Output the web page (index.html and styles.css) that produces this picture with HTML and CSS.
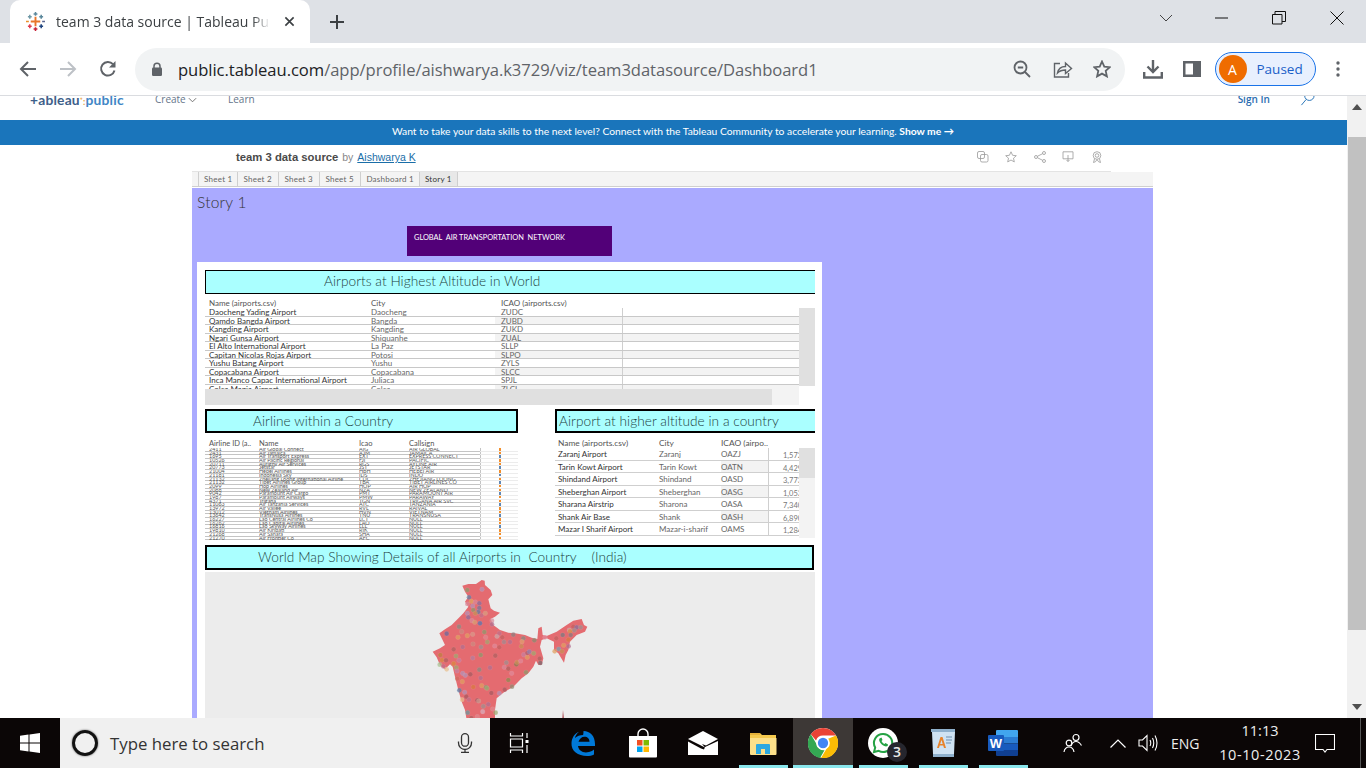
FILE: index.html
```html
<!DOCTYPE html>
<html lang="en">
<head>
<meta charset="utf-8">
<title>team 3 data source | Tableau Public</title>
<link rel="stylesheet" href="styles.css">
</head>
<body>
<div class="screen">
  <header class="tabstrip">
    <div class="tab">
      <svg class="favicon" viewBox="0 0 20 20"><g stroke-width="1.6" fill="none"><path d="M10 5v10M5 10h10" stroke="#e8762b" stroke-width="2"/><path d="M10 0v4M8 2h4" stroke="#5b879b"/><path d="M10 16v4M8 18h4" stroke="#c72037"/><path d="M4 3v4M2 5h4" stroke="#7099a6"/><path d="M16 3v4M14 5h4" stroke="#59879b"/><path d="M4 13v4M2 15h4" stroke="#e03c4f"/><path d="M16 13v4M14 15h4" stroke="#1f447e"/><path d="M0 10h3" stroke="#eb9129"/><path d="M17 10h3" stroke="#5b6591"/></g></svg>
      <span class="tab-title">team 3 data source | Tableau Public</span>
      <svg class="tab-close" viewBox="0 0 12 12"><path d="M1.5 1.5l9 9M10.5 1.5l-9 9" stroke="#3c4043" stroke-width="1.8"/></svg>
    </div>
    <svg class="new-tab" viewBox="0 0 16 16"><path d="M8 1v14M1 8h14" stroke="#3c4043" stroke-width="2"/></svg>
    <div class="win-controls">
      <svg class="wc wc-chev" viewBox="0 0 14 8"><path d="M1 1l6 6 6-6" fill="none" stroke="#444" stroke-width="1"/></svg>
      <svg class="wc wc-min" viewBox="0 0 14 14"><path d="M0 7h13" stroke="#111" stroke-width="1"/></svg>
      <svg class="wc wc-max" viewBox="0 0 14 14"><path d="M.5 3.500h9.500v9.500h-9.500zM3 3.500v-3h10.500v10h-3.500" fill="none" stroke="#111" stroke-width="1"/></svg>
      <svg class="wc wc-close" viewBox="0 0 14 14"><path d="M.5.500l13 13M13.500.500l-13 13" stroke="#111" stroke-width="1"/></svg>
    </div>
  </header>

  <div class="toolbar">
    <svg class="nav-ic" viewBox="0 0 18 18"><path d="M17 9H2M9 2L2 9l7 7" fill="none" stroke="#5f6368" stroke-width="2"/></svg>
    <svg class="nav-ic" viewBox="0 0 18 18"><path d="M1 9h15M9 2l7 7-7 7" fill="none" stroke="#bdc1c6" stroke-width="2"/></svg>
    <svg class="nav-ic" viewBox="0 0 18 18"><path d="M15.500 10.500A6.800 6.800 0 1 1 14 4.200" fill="none" stroke="#5f6368" stroke-width="2"/><path d="M16.500 1v6.500H10z" fill="#5f6368"/></svg>
    <div class="omnibox">
      <svg class="lock" viewBox="0 0 12 14"><path d="M3 6V4.200a3 3 0 0 1 6 0V6" fill="none" stroke="#5f6368" stroke-width="1.500"/><rect x="1" y="5.500" width="10" height="8.500" rx="1.200" fill="#5f6368"/></svg>
      <span class="url"><span class="url-host">public.tableau.com</span>/app/profile/aishwarya.k3729/viz/team3datasource/Dashboard1</span>
      <svg class="omni-ic zoom-ic" viewBox="0 0 18 18"><circle cx="7.500" cy="7.500" r="6" fill="none" stroke="#5f6368" stroke-width="1.800"/><path d="M4.800 7.500h5.400M12 12l5 5" stroke="#5f6368" stroke-width="1.800"/></svg>
      <svg class="omni-ic share-ic" viewBox="0 0 20 18"><path d="M7 3.500H1.500v13.500h14V13" fill="none" stroke="#5f6368" stroke-width="1.400"/><path d="M4.500 13c.8-4 4-6.500 8-6.500V3l6 5.500-6 5V10c-3.500 0-6 1-8 3z" fill="none" stroke="#5f6368" stroke-width="1.400"/></svg>
      <svg class="omni-ic star-ic" viewBox="0 0 18 18"><path d="M9 1.500l2.300 5.100 5.500.6-4.100 3.700 1.200 5.500L9 13.600l-4.900 2.800 1.200-5.500L1.200 7.200l5.500-.6z" fill="none" stroke="#5f6368" stroke-width="1.800"/></svg>
    </div>
    <svg class="tool-ic dl-ic" viewBox="0 0 20 20"><path d="M10 1v11M4.500 7.500L10 13l5.500-5.500" fill="none" stroke="#5f6368" stroke-width="2.400"/><path d="M1.200 13v5.500h17.600V13" fill="none" stroke="#5f6368" stroke-width="2.400"/></svg>
    <svg class="tool-ic side-ic" viewBox="0 0 18 16"><path d="M0 0h18v16H0z" fill="#5f6368"/><path d="M2.500 2.500h7.500v11H2.500z" fill="#fff"/></svg>
    <div class="profile"><span class="avatar">A</span><span class="paused">Paused</span></div>
    <svg class="dots" viewBox="0 0 4 16"><circle cx="2" cy="2" r="1.700"/><circle cx="2" cy="8" r="1.700"/><circle cx="2" cy="14" r="1.700"/></svg>
  </div>

  <div class="viewport">
    <main class="page">
      <nav class="sitenav">
        <span class="logo"><span class="logo-a">+ableau</span><span class="logo-dot">⁺:</span><span class="logo-b">public</span></span>
        <span class="navlink nav-create">Create<svg class="caret" viewBox="0 0 10 6"><path d="M1 1l4 4 4-4" fill="none" stroke="#666" stroke-width="1"/></svg></span>
        <span class="navlink nav-learn">Learn</span>
        <span class="signin">Sign In</span>
        <svg class="search" viewBox="0 0 16 16"><circle cx="10" cy="4" r="5" fill="none" stroke="#1f6fb5" stroke-width="1"/><path d="M6.500 8L1.500 14" stroke="#1f6fb5" stroke-width="1"/></svg>
      </nav>
      <div class="banner">Want to take your data skills to the next level? Connect with the Tableau Community to accelerate your learning. <b>Show me →</b></div>
      <div class="vizhead">
        <div class="vizname"><b>team 3 data source</b> <span class="by">by</span> <a class="author">Aishwarya K</a></div>
        <div class="vizactions">
          <svg viewBox="0 0 12 12"><rect x=".5" y=".5" width="7" height="7" rx="1.500"/><rect x="3.500" y="3.500" width="7.500" height="7.500" rx="1.500"/></svg>
          <svg viewBox="0 0 12 12"><path d="M6 .8l1.600 3.500 3.700.4-2.800 2.500.8 3.700L6 9l-3.300 1.900.8-3.700L.7 4.700l3.700-.4z"/></svg>
          <svg viewBox="0 0 12 12"><circle cx="2" cy="6" r="1.500"/><circle cx="10" cy="2" r="1.500"/><circle cx="10" cy="10" r="1.500"/><path d="M3.400 5.300l5.200-2.600M3.400 6.700l5.200 2.600"/></svg>
          <svg viewBox="0 0 12 12"><path d="M1 .8h10v7H1zM6 4v6.500M4.500 9L6 10.500 7.500 9"/></svg>
          <svg viewBox="0 0 12 12"><circle cx="6" cy="4.500" r="3.800"/><circle cx="6" cy="4.500" r="1.800"/><path d="M3.500 8L2.500 11.500l2-.8L6 8.500l1.500 2.200 2 .8L8.500 8"/></svg>
        </div>
      </div>
      <section class="viz">
        <div class="vtabs">
          <span class="vtab">Sheet 1</span><span class="vtab vtab-w">Sheet 2</span><span class="vtab vtab-w">Sheet 3</span><span class="vtab vtab-w">Sheet 5</span><span class="vtab">Dashboard 1</span><span class="vtab vtab-on">Story 1</span>
        </div>
        <div class="story">
          <h1 class="story-title">Story 1</h1>
          <div class="purple">GLOBAL  AIR TRANSPORTATION  NETWORK</div>
          <div class="board">
            <h2 class="bar bar-wide"><span class="t1">Airports at Highest Altitude in World</span></h2>
            <div class="t-block">
              <div class="th tg-high"><span>Name (airports.csv)</span><span>City</span><span>ICAO (airports.csv)</span></div>
              <div class="t-body">
                <div class="high-rows">
                  <div class="tr tg-high"><span>Daocheng Yading Airport</span><span class="m">Daocheng</span><span class="m">ZUDC</span></div>
                  <div class="tr tg-high alt"><span>Qamdo Bangda Airport</span><span class="m">Bangda</span><span class="m">ZUBD</span></div>
                  <div class="tr tg-high"><span>Kangding Airport</span><span class="m">Kangding</span><span class="m">ZUKD</span></div>
                  <div class="tr tg-high alt"><span>Ngari Gunsa Airport</span><span class="m">Shiquanhe</span><span class="m">ZUAL</span></div>
                  <div class="tr tg-high"><span>El Alto International Airport</span><span class="m">La Paz</span><span class="m">SLLP</span></div>
                  <div class="tr tg-high alt"><span>Capitan Nicolas Rojas Airport</span><span class="m">Potosi</span><span class="m">SLPO</span></div>
                  <div class="tr tg-high"><span>Yushu Batang Airport</span><span class="m">Yushu</span><span class="m">ZYLS</span></div>
                  <div class="tr tg-high alt"><span>Copacabana Airport</span><span class="m">Copacabana</span><span class="m">SLCC</span></div>
                  <div class="tr tg-high"><span>Inca Manco Capac International Airport</span><span class="m">Juliaca</span><span class="m">SPJL</span></div>
                  <div class="tr tg-high alt"><span>Colca Magia Airport</span><span class="m">Colca</span><span class="m">ZLCL</span></div>
                </div>
                <div class="vscroll"></div>
              </div>
              <div class="hscroll"><div class="hthumb"></div></div>
            </div>

            <div class="two-col">
              <div class="col-air">
                <h2 class="bar"><span class="t2">Airline within a Country</span></h2>
                <div class="th ta-grid"><span>Airline ID (a..</span><span>Name</span><span>Icao</span><span>Callsign</span></div>
                <div class="tiny">
                  <div class="trow"><span>2411</span><span>Air Global Connect</span><span>AIG</span><span>AIR GLOBAL</span><i class="o"></i></div>
                  <div class="trow"><span>2431</span><span>Air Jamaica</span><span>AJM</span><span>JAMAICA</span><i class="o"></i></div>
                  <div class="trow"><span>1695</span><span>Air Transport Express</span><span>EXT</span><span>EXPRESS CONNECT</span><i class="b"></i></div>
                  <div class="trow"><span>10526</span><span>Air Pacific Regional</span><span>FJI</span><span>PACIFIC</span><i class="o"></i></div>
                  <div class="trow"><span>20711</span><span>Aurigny Air Services</span><span>RGS</span><span>AYLINE AIR</span><i class="o"></i></div>
                  <div class="trow"><span>20773</span><span>Jetstar</span><span>JST</span><span>JETSTAR</span><i class="b"></i></div>
                  <div class="trow"><span>21004</span><span>Hebei Airlines</span><span>HBH</span><span>HEBEI AIR</span><i class="o"></i></div>
                  <div class="trow"><span>21181</span><span>Indonesia Sky</span><span>IDS</span><span>INDO</span><i class="b"></i></div>
                  <div class="trow"><span>21132</span><span>Zhejiang Loong International Airline</span><span>CDC</span><span>ZHEJIANG LOONG</span><i class="o"></i></div>
                  <div class="trow"><span>21132</span><span>Tibet Airlines Group</span><span>TBA</span><span>TIBET AIRLINES CO</span><i class="b"></i></div>
                  <div class="trow"><span>2099</span><span>Hop Airlines</span><span>HOP</span><span>AIR HOP</span><i class="o"></i></div>
                  <div class="trow"><span>2088</span><span>New Zealand Air</span><span>NZA</span><span>NEW ZEALAND</span><i class="o"></i></div>
                  <div class="trow"><span>9042</span><span>Paramount Air Cargo</span><span>PMT</span><span>PARAMOUNT AIR</span><i class="b"></i></div>
                  <div class="trow"><span>1987</span><span>Paramount Airways</span><span>PMW</span><span>PARAWAY</span><i class="o"></i></div>
                  <div class="trow"><span>4371</span><span>Trigana</span><span>TGN</span><span>TRIGANA AIR SVC</span><i class="o"></i></div>
                  <div class="trow"><span>11063</span><span>Air Tanzania Services</span><span>ATC</span><span>TANZANIA</span><i class="b"></i></div>
                  <div class="trow"><span>13972</span><span>Air Vallee</span><span>RVL</span><span>RAIVAL</span><i class="o"></i></div>
                  <div class="trow"><span>13012</span><span>Vietnam Airlines</span><span>HVN</span><span>VIETNAM</span><i class="o"></i></div>
                  <div class="trow"><span>13642</span><span>TransNusa Airlines</span><span>TNU</span><span>TRANSNUSA</span><i class="b"></i></div>
                  <div class="trow"><span>16227</span><span>Lao Central Airlines Co</span><span>LCT</span><span>NULL</span><i class="o"></i></div>
                  <div class="trow"><span>16262</span><span>Lao Capital Airlines</span><span>LAO</span><span>NULL</span><i class="o"></i></div>
                  <div class="trow"><span>16816</span><span>Lao Skyway Airlines</span><span>LLL</span><span>NULL</span><i class="b"></i></div>
                  <div class="trow"><span>19810</span><span>Air Kiribati</span><span>RIK</span><span>NULL</span><i class="o"></i></div>
                  <div class="trow"><span>21268</span><span>Air Sahara</span><span>SHA</span><span>NULL</span><i class="o"></i></div>
                  <div class="trow"><span>21270</span><span>Air Frontier Co</span><span>AFC</span><span>NULL</span><i class="o"></i></div>
                </div>
              </div>
              <div class="col-alt">
                <h2 class="bar bar-open"><span class="t3">Airport at higher altitude in a country</span></h2>
                <div class="th tb-grid"><span>Name (airports.csv)</span><span>City</span><span>ICAO (airpo..</span></div>
                <div class="alt-body">
                  <div class="alt-rows">
                    <div class="tb tb-grid"><span>Zaranj Airport</span><span class="m">Zaranj</span><span class="m">OAZJ</span><span class="n">1,572</span></div>
                    <div class="tb tb-grid alt"><span>Tarin Kowt Airport</span><span class="m">Tarin Kowt</span><span class="m">OATN</span><span class="n">4,429</span></div>
                    <div class="tb tb-grid"><span>Shindand Airport</span><span class="m">Shindand</span><span class="m">OASD</span><span class="n">3,773</span></div>
                    <div class="tb tb-grid alt"><span>Sheberghan Airport</span><span class="m">Sheberghan</span><span class="m">OASG</span><span class="n">1,053</span></div>
                    <div class="tb tb-grid"><span>Sharana Airstrip</span><span class="m">Sharona</span><span class="m">OASA</span><span class="n">7,340</span></div>
                    <div class="tb tb-grid alt"><span>Shank Air Base</span><span class="m">Shank</span><span class="m">OASH</span><span class="n">6,890</span></div>
                    <div class="tb tb-grid"><span>Mazar I Sharif Airport</span><span class="m">Mazar-i-sharif</span><span class="m">OAMS</span><span class="n">1,284</span></div>
                  </div>
                  <div class="alt-scroll"><div class="alt-thumb"></div></div>
                </div>
              </div>
            </div>

            <h2 class="bar bar-map"><span class="t4">World Map Showing Details of all Airports in  Country    (India)</span></h2>
            <div class="map">
              <svg class="mapsvg" viewBox="205 572 610 146" preserveAspectRatio="xMinYMin slice">
                <g transform="translate(400 570) scale(.33333)">
                  <path fill="#e46b70" d="M187 47L205 42 228 42 245 30 254 32 255 45 272 60 277 75 265 88 268 100 272 115 282 122 300 128 285 140 272 147 280 165 300 180 325 188 345 190 375 195 395 203 412 207 415 175 425 170 428 195 440 198 470 185 500 165 520 152 545 147 552 165 562 170 555 185 530 195 510 215 505 240 497 255 492 278 482 262 475 250 462 240 462 215 440 205 425 210 420 230 430 265 425 285 415 285 408 272 400 290 385 310 365 325 340 350 310 368 290 385 285 420 285 450 200 450 195 420 185 395 175 360 165 320 158 290 150 283 135 298 120 285 110 262 98 245 120 235 135 225 118 190 135 178 155 165 170 150 190 130 205 110 195 95 205 80 195 65z"/>
                  <path fill="#b86a70" d="M486 450l3-30 4 30z"/>
                  <g class="pins">
                    <circle cx="202" cy="60" fill="#8c9a6c"/><circle cx="246" cy="58" fill="#b494b8"/><circle cx="207" cy="82" fill="#5f7ea6"/><circle cx="214" cy="94" fill="#e0a860"/><circle cx="226" cy="96" fill="#d98a9a"/><circle cx="202" cy="102" fill="#d98a9a"/><circle cx="238" cy="100" fill="#8a6e9e"/><circle cx="218" cy="108" fill="#b494b8"/><circle cx="238" cy="114" fill="#6f7a9e"/><circle cx="220" cy="120" fill="#8c9a6c"/><circle cx="235" cy="126" fill="#5f7ea6"/><circle cx="226" cy="130" fill="#c99055"/><circle cx="202" cy="130" fill="#b494b8"/><circle cx="205" cy="142" fill="#8a6e9e"/><circle cx="244" cy="136" fill="#c2708a"/><circle cx="256" cy="130" fill="#d9a080"/><circle cx="216" cy="152" fill="#d98a9a"/><circle cx="224" cy="157" fill="#d9a070"/><circle cx="240" cy="160" fill="#5577b0"/><circle cx="276" cy="152" fill="#d98a9a"/><circle cx="276" cy="163" fill="#b27090"/><circle cx="177" cy="170" fill="#8a8a80"/><circle cx="140" cy="191" fill="#6a6a9e"/><circle cx="185" cy="185" fill="#cc8a80"/><circle cx="174" cy="202" fill="#e0a060"/><circle cx="202" cy="197" fill="#e0a060"/><circle cx="218" cy="193" fill="#d99a8a"/><circle cx="253" cy="186" fill="#8c9a6c"/><circle cx="257" cy="202" fill="#e08a90"/><circle cx="262" cy="216" fill="#a0a870"/><circle cx="291" cy="199" fill="#ccaaaa"/><circle cx="298" cy="190" fill="#c2708a"/><circle cx="307" cy="202" fill="#c46060"/><circle cx="340" cy="194" fill="#8e8080"/><circle cx="312" cy="216" fill="#a08a90"/><circle cx="330" cy="216" fill="#b27090"/><circle cx="370" cy="205" fill="#8a8a80"/><circle cx="366" cy="215" fill="#e0a070"/><circle cx="364" cy="229" fill="#c99055"/><circle cx="403" cy="211" fill="#8a8a70"/><circle cx="219" cy="222" fill="#cc8a80"/><circle cx="188" cy="231" fill="#b27090"/><circle cx="161" cy="238" fill="#b06060"/><circle cx="243" cy="231" fill="#a09090"/><circle cx="284" cy="228" fill="#e08a9a"/><circle cx="298" cy="232" fill="#c46060"/><circle cx="121" cy="255" fill="#c08040"/><circle cx="126" cy="270" fill="#d98a40"/><circle cx="138" cy="271" fill="#b06060"/><circle cx="168" cy="258" fill="#a0a870"/><circle cx="177" cy="271" fill="#c880a0"/><circle cx="218" cy="264" fill="#b47fa0"/><circle cx="242" cy="255" fill="#8c9a6c"/><circle cx="286" cy="257" fill="#b06060"/><circle cx="119" cy="284" fill="#a8c090"/><circle cx="130" cy="289" fill="#c2708a"/><circle cx="140" cy="298" fill="#e8c090"/><circle cx="161" cy="281" fill="#d98a40"/><circle cx="169" cy="293" fill="#a0a870"/><circle cx="171" cy="303" fill="#c880a0"/><circle cx="188" cy="310" fill="#b494b8"/><circle cx="196" cy="316" fill="#b494b8"/><circle cx="211" cy="313" fill="#a85a60"/><circle cx="238" cy="299" fill="#8a8a80"/><circle cx="270" cy="293" fill="#b27090"/><circle cx="313" cy="292" fill="#d98a9a"/><circle cx="325" cy="296" fill="#b06060"/><circle cx="319" cy="278" fill="#a09090"/><circle cx="349" cy="283" fill="#8a7a50"/><circle cx="351" cy="277" fill="#c99055"/><circle cx="362" cy="273" fill="#e08a9a"/><circle cx="371" cy="254" fill="#c880a0"/><circle cx="382" cy="262" fill="#e0a060"/><circle cx="382" cy="249" fill="#b06070"/><circle cx="388" cy="245" fill="#9080b0"/><circle cx="401" cy="250" fill="#a0a870"/><circle cx="419" cy="266" fill="#b06060"/><circle cx="421" cy="279" fill="#7a6a70"/><circle cx="378" cy="307" fill="#8c9a6c"/><circle cx="335" cy="310" fill="#e08a9a"/><circle cx="325" cy="330" fill="#8c8a50"/><circle cx="336" cy="350" fill="#908a70"/><circle cx="314" cy="359" fill="#a85a60"/><circle cx="298" cy="370" fill="#b494b8"/><circle cx="274" cy="369" fill="#a85a60"/><circle cx="258" cy="352" fill="#8c9a6c"/><circle cx="261" cy="355" fill="#a0a870"/><circle cx="245" cy="347" fill="#e0a060"/><circle cx="220" cy="351" fill="#d97a40"/><circle cx="242" cy="324" fill="#b27090"/><circle cx="172" cy="326" fill="#d06a60"/><circle cx="187" cy="335" fill="#e0a060"/><circle cx="178" cy="361" fill="#5f7ea6"/><circle cx="194" cy="367" fill="#b494b8"/><circle cx="199" cy="380" fill="#a85a60"/><circle cx="186" cy="389" fill="#e8c090"/><circle cx="207" cy="389" fill="#c2708a"/><circle cx="232" cy="391" fill="#a85a60"/><circle cx="236" cy="393" fill="#cc9a90"/><circle cx="265" cy="403" fill="#b27090"/><circle cx="250" cy="409" fill="#a09090"/><circle cx="248" cy="425" fill="#d9b0c0"/><circle cx="203" cy="428" fill="#6a9aa0"/><circle cx="287" cy="428" fill="#a0a870"/><circle cx="278" cy="417" fill="#e08a90"/><circle cx="232" cy="440" fill="#e08a90"/><circle cx="214" cy="444" fill="#b06060"/>
                    <circle cx="435" cy="202" fill="#e08a9a"/><circle cx="469" cy="205" fill="#c46060"/><circle cx="488" cy="195" fill="#7a7a80"/><circle cx="508" cy="180" fill="#ccaaaa"/><circle cx="510" cy="184" fill="#d98a40"/><circle cx="512" cy="195" fill="#8a7a80"/><circle cx="520" cy="170" fill="#c46060"/><circle cx="530" cy="172" fill="#8a6e9e"/><circle cx="542" cy="172" fill="#a09090"/><circle cx="523" cy="181" fill="#a09090"/><circle cx="505" cy="209" fill="#d97a40"/><circle cx="491" cy="226" fill="#e0a060"/><circle cx="506" cy="229" fill="#b27090"/><circle cx="476" cy="237" fill="#7aa0b0"/><circle cx="464" cy="244" fill="#e0a060"/><circle cx="486" cy="244" fill="#c99055"/>
                  </g>
                </g>
              </svg>
            </div>
          </div>
        </div>
      </section>
    </main>
    <aside class="scrollbar">
      <svg class="sb-arrow" viewBox="0 0 10 6"><path d="M0 6l5-6 5 6z" fill="#505050"/></svg>
      <div class="sb-track"><div class="sb-thumb"></div></div>
      <svg class="sb-arrow" viewBox="0 0 10 6"><path d="M0 0l5 6 5-6z" fill="#505050"/></svg>
    </aside>
  </div>

  <footer class="taskbar">
    <div class="start"><svg viewBox="0 0 20 20"><path fill="#fff" d="M0 2.800l8.500-1.200v7.900H0zM9.500 1.400L20 0v9.500H9.500zM0 10.500h8.500v7.900L0 17.200zM9.500 10.500H20V20L9.500 18.600z"/></svg></div>
    <div class="searchbox">
      <span class="cortana"></span>
      <span class="search-text">Type here to search</span>
      <svg class="mic" viewBox="0 0 16 20"><rect x="4.500" y=".7" width="7" height="12.500" rx="3.500" fill="none" stroke="#333" stroke-width="1.300"/><path d="M1.500 8.500v1.500a6.500 6.500 0 0 0 13 0V8.500M8 16.500v3M4 19.500h8" fill="none" stroke="#333" stroke-width="1.300"/></svg>
    </div>
    <div class="cell cell-task"><svg class="i-task" viewBox="0 0 22 22"><path d="M1.500 1v3h12v-3M1.500 21v-3h12v3M1.500 7h12v8h-12zM18 1v5M18 13v8" fill="none" stroke="#fff" stroke-width="1.200"/><rect x="16.500" y="8" width="3" height="3" fill="#fff"/></svg></div>
    <div class="cell"><svg class="i-26" viewBox="0 0 26 26"><path fill="#0078d7" d="M13.500 1C20 1 25 6 25 14v2H8c.5 4.500 5 7.500 11 6 2-.5 4-1.500 5-2.500v5c-2 1.200-4.500 1.500-7 1.500C8 26 1 21 1.500 13 1.800 8 4.500 3.500 9 1.800 6.500 4 5.300 6 5 8c2-2 5-3 8-3 .5 0 .5-4 .5-4zM8.500 11.800h11c0-3-2-5-5-5s-5 2-6 5z"/></svg></div>
    <div class="cell"><svg class="i-28" viewBox="0 0 28 30"><path d="M9 9V6a5 5 0 0 1 10 0v3" fill="none" stroke="#fff" stroke-width="1.400"/><path d="M0 8h28v20.500a1 1 0 0 1-1 1H1a1 1 0 0 1-1-1z" fill="#fff"/><path fill="#f25022" d="M8 12h5.500v5.500H8z"/><path fill="#7fba00" d="M14.500 12H20v5.500h-5.500z"/><path fill="#00a4ef" d="M8 18.500h5.500V24H8z"/><path fill="#ffb900" d="M14.500 18.500H20V24h-5.500z"/></svg></div>
    <div class="cell"><svg class="i-30" viewBox="0 0 30 24"><path fill="#fff" d="M0 8L15 0l15 8-12 6.500-4-1.500 3 3.500zM0 10.500l13 7 3 1 1-2.500 13-6V24H0z"/></svg></div>
    <div class="cell run"><svg class="i-28" viewBox="0 0 28 26"><path d="M1 3h10l2 2h14v7H1z" fill="#f5c94e"/><path d="M1 3h10v2H1z" fill="#e5b13a"/><path d="M1 8h26.500v16a1 1 0 0 1-1 1H2a1 1 0 0 1-1-1z" fill="#fde08a"/><path d="M7 24v-9a1 1 0 0 1 1-1h12a1 1 0 0 1 1 1v9h-5v-5h-4v5z" fill="#2da8e0"/></svg></div>
    <div class="cell run on"><svg class="i-30" viewBox="0 0 30 30"><circle cx="15" cy="15" r="15" fill="#fff"/><path d="M15 0a15 15 0 0 1 13 7.500H15a7.500 7.500 0 0 0-7 5L2.800 6.300A15 15 0 0 1 15 0z" fill="#ea4335"/><path d="M2.800 6.300L8.500 16a7.500 7.500 0 0 0 8 6.300L12 30A15 15 0 0 1 2.800 6.300z" fill="#34a853"/><path d="M28 7.500A15 15 0 0 1 13 30l6.500-11a7.500 7.500 0 0 0 0-8z" fill="#fbbc05"/><circle cx="15" cy="15" r="6" fill="#4285f4" stroke="#fff" stroke-width="1.700"/></svg></div>
    <div class="cell run badge-cell">
      <svg class="i-30" viewBox="0 0 30 30"><circle cx="15" cy="15" r="15" fill="#fff"/><path d="M15 6a9 9 0 0 0-7.800 13.500L6 24l4.700-1.200A9 9 0 1 0 15 6z" fill="none" stroke="#25a244" stroke-width="2"/><path d="M11.500 10.500c-1.500 2 2 7.500 6.500 8 1.500 0 2-1 2-2l-2.500-1.500-1 1c-1.500-.5-2.500-2-3-3l1-1-1-2.500z" fill="#25a244"/></svg>
      <span class="count">3</span>
    </div>
    <div class="cell run"><svg class="i-30" viewBox="0 0 26 30"><path d="M1 1h24v3l-1 22v3H3v-3L2 4z" fill="#cfe2f2"/><path d="M1 1h24v3H1zM3 26h21v3H3z" fill="#8fb0cc"/><path d="M7 20l3.500-11h2L16 20h-2l-.8-2.500h-3.500L9 20zM10.200 16h2.500l-1.200-4z" fill="#e8832a"/><path d="M16 9h6M16 12h6M16 15h5" stroke="#6c8fb0"/></svg></div>
    <div class="cell run"><svg class="i-30" viewBox="0 0 30 26"><path d="M9 0h20a1 1 0 0 1 1 1v6H8V1a1 1 0 0 1 1-1z" fill="#41a5ee"/><path d="M8 7h22v6.500H8z" fill="#2b7cd3"/><path d="M8 13.500h22V20H8z" fill="#185abd"/><path d="M8 20h22v5a1 1 0 0 1-1 1H9a1 1 0 0 1-1-1z" fill="#103f91"/><rect y="5" width="16" height="16" rx="1" fill="#185abd"/><text class="word-w" x="8" y="17.500" text-anchor="middle">W</text></svg></div>
    <div class="tray">
      <svg class="t-people" viewBox="0 0 20 20"><circle cx="13" cy="4.500" r="3" fill="none" stroke="#fff" stroke-width="1.200"/><path d="M8 13c1-3 3-4.500 5-4.500s4 1.500 5.500 4" fill="none" stroke="#fff" stroke-width="1.200"/><circle cx="6" cy="10" r="2.800" fill="#0a0505" stroke="#fff" stroke-width="1.200"/><path d="M1 19c.5-3 2.500-5 5-5s4.500 2 5 5" fill="none" stroke="#fff" stroke-width="1.200"/></svg>
      <svg class="t-caret" viewBox="0 0 16 9"><path d="M.5 8.500L8 1l7.500 7.500" fill="none" stroke="#fff" stroke-width="1.200"/></svg>
      <svg class="t-vol" viewBox="0 0 20 18"><path d="M1 6h3.500L9 1.500v15L4.500 12H1z" fill="none" stroke="#fff" stroke-width="1.100"/><path d="M12 6q1.500 3 0 6M14.500 4q2.500 5 0 10M17 1.500q4 7.500 0 15" fill="none" stroke="#fff" stroke-width="1.100"/></svg>
      <span class="t-lang">ENG</span>
      <div class="t-clock"><span>11:13</span><span class="t-date">10-10-2023</span></div>
      <svg class="t-note" viewBox="0 0 20 19"><path d="M.5.500h19v15H12l-2 2.500-2-2.500H.5z" fill="none" stroke="#fff" stroke-width="1.100"/></svg>
      <span class="t-edge"></span>
    </div>
  </footer>
</div>
</body>
</html>
```

FILE: styles.css
```css
* { box-sizing: border-box; }
html, body { margin: 0; padding: 0; overflow: hidden; }
body { width: 1366px; height: 768px; font-family: "Open Sans", "Liberation Sans", sans-serif; background: #fff; }
.screen { width: 1366px; height: 768px; display: flex; flex-direction: column; overflow: hidden; }

/* browser chrome */
.tabstrip { height: 43px; flex: none; background: #dee1e6; display: flex; align-items: center; }
.tab { width: 300px; height: 43px; margin-left: 10px; background: #fff; border-radius: 10px 10px 0 0; display: flex; align-items: center; padding-left: 16px; position: relative; }
.favicon { width: 19px; height: 19px; flex: none; }
.tab-title { margin-left: 11px; width: 214px; flex: none; overflow: hidden; white-space: nowrap; font-size: 14px; color: #3c4043; -webkit-mask-image: linear-gradient(90deg, #000 92%, transparent 100%); mask-image: linear-gradient(90deg, #000 92%, transparent 100%); }
.tab-close { width: 11px; height: 11px; margin-left: 14px; flex: none; }
.new-tab { width: 16px; height: 16px; margin-left: 19px; }
.win-controls { margin-left: auto; display: flex; align-items: center; height: 36px; align-self: flex-start; }
.wc { display: block; flex: none; }
.wc-chev { width: 14px; height: 8px; margin-right: 42px; }
.wc-min { width: 14px; height: 14px; margin-right: 43px; }
.wc-max { width: 14px; height: 14px; margin-right: 44px; }
.wc-close { width: 14px; height: 14px; margin-right: 22px; }

.toolbar { height: 53px; flex: none; background: #fff; border-bottom: 1px solid #dadce0; display: flex; align-items: center; padding-left: 19px; }
.nav-ic { width: 18px; height: 18px; flex: none; margin-right: 22px; }
.omnibox { width: 990px; height: 43px; margin-left: -4px; border-radius: 22px; background: #f1f3f4; display: flex; align-items: center; padding-left: 16px; flex: none; }
.lock { width: 12px; height: 14px; flex: none; }
.url { margin-left: 15px; font-size: 16.600px; color: #5f6368; white-space: nowrap; width: 835px; flex: none; letter-spacing: -.05px; }
.url-host { color: #202124; }
.omni-ic { flex: none; }
.zoom-ic { width: 18px; height: 18px; margin-left: 0; }
.share-ic { width: 20px; height: 18px; margin-left: 22px; }
.star-ic { width: 18px; height: 18px; margin-left: 20px; }
.tool-ic { flex: none; }
.dl-ic { width: 20px; height: 20px; margin-left: 18px; }
.side-ic { width: 18px; height: 16px; margin-left: 20px; }
.profile { width: 101px; height: 34px; margin-left: 14px; border: 1.500px solid #1a73e8; border-radius: 17px; background: #e8f0fe; display: flex; align-items: center; padding-left: 2.500px; flex: none; }
.avatar { width: 28px; height: 28px; border-radius: 50%; background: #ef6c00; color: #fff; font-size: 14px; display: flex; align-items: center; justify-content: center; flex: none; }
.paused { margin-left: 10px; font-size: 13.500px; color: #1a5fc8; }
.dots { width: 4px; height: 16px; margin-left: 20px; fill: #5f6368; flex: none; }

/* page */
.viewport { flex: 1; min-height: 0; display: flex; overflow: hidden; }
.page { width: 1347px; flex: none; overflow: hidden; display: flex; flex-direction: column; background: #fff; }
.sitenav { height: 24px; flex: none; display: flex; align-items: flex-start; padding-left: 30px; font-family: "Open Sans", sans-serif; font-size: 10px; color: #65758a; }
.logo { font-family: "Lato", sans-serif; font-weight: 700; font-size: 13.800px; line-height: 7px; letter-spacing: .2px; width: 125px; white-space: nowrap; height: 10px; }
.logo-a { color: #3e5f8a; }
.logo-dot { color: #e8a040; font-size: 9px; }
.logo-b { color: #3f86c6; }
.navlink { line-height: 6px; }
.nav-create { width: 73px; }
.caret { width: 9px; height: 6px; margin-left: 2px; }
.signin { margin-left: 983px; color: #2a6db0; font-weight: 600; line-height: 6px; }
.search { width: 15px; height: 15px; margin: -4px 0 0 30px; }
.banner { height: 25px; flex: none; background: #1a75bb; color: #fff; font-family: "Lato", sans-serif; font-size: 10.300px; text-align: center; line-height: 23px; padding-right: 1px; }
.banner b { font-weight: 700; }
.vizhead { height: 27px; flex: none; display: flex; align-items: center; margin-left: 192px; width: 919px; border-bottom: 1px solid #e3e3e3; padding: 0 0 2px 44px; }
.vizname { font-family: "Liberation Sans", sans-serif; font-size: 10.500px; color: #555; white-space: nowrap; }
.vizname b { color: #4a4a4a; font-size: 11.300px; }
.by { color: #888; margin-left: 1px; }
.author { color: #1a6ea8; text-decoration: underline; margin-left: 1px; }
.vizactions { margin-left: auto; display: flex; gap: 16.500px; margin-right: 8.500px; }
.vizactions svg { width: 12px; height: 12px; fill: none; stroke: #999; stroke-width: .8; display: block; }

.viz { width: 961px; margin-left: 192px; flex: 1; min-height: 0; display: flex; flex-direction: column; overflow: hidden; }
.vtabs { height: 15px; flex: none; background: #f4f4f4; border-bottom: 1px solid #cfcfcf; display: flex; padding-left: 6px; font-family: "Lato", sans-serif; font-size: 8px; color: #666; }
.vtab { padding: 0 5px; line-height: 14px; border-left: 1px solid #cfcfcf; letter-spacing: .25px; }
.vtab-w { padding-right: 6.500px; }
.vtab-on { background: #e8e8e8; color: #333; border-right: 1px solid #cfcfcf; }
.story { flex: 1; min-height: 0; margin-top: 1px; background: #aaaaff; display: flex; flex-direction: column; overflow: hidden; padding-left: 5px; }
.story-title { margin: 5px 0 0; font-family: "Lato", sans-serif; font-weight: 300; font-size: 15.500px; line-height: 18px; color: #333; letter-spacing: .25px; flex: none; }
.purple { flex: none; width: 205px; height: 30px; margin: 15px 0 0 210px; background: #520078; color: #fff; font-family: "Lato", sans-serif; font-size: 7.400px; padding: 7px 0 0 7px; white-space: pre; line-height: 10px; }
.board { flex: none; width: 625px; height: 456px; margin-top: 6px; background: #fff; padding: 8px 0 0 8px; overflow: hidden; }
.bar { margin: 0; height: 24px; width: 610px; background: #aaffff; border: 1.500px solid #000; font-family: "Lato", sans-serif; font-weight: 300; font-size: 13.650px; line-height: 21px; color: #203c3c; white-space: pre; letter-spacing: .05px; }
.bar-wide { border-right: 0; }
.bar-open { border-right: 0; }
.t1 { margin-left: 118px; }
.t2 { margin-left: 46px; }
.t3 { margin-left: 2px; }
.t4 { margin-left: 51px; }

.th, .tr, .tb { font-family: "Lato", sans-serif; white-space: nowrap; }
.th { font-size: 8px; color: #555; }
.tg-high { display: grid; grid-template-columns: 162px 130px 121px; padding-left: 4px; }
.t-block { height: 110px; }
.t-block > .th { height: 14px; line-height: 18px; }
.t-body { display: flex; align-items: flex-start; height: 81px; width: 610px; overflow: hidden; }
.high-rows { width: 594px; height: 81px; flex: none; overflow: hidden; }
.tr { height: 8.500px; line-height: 8.500px; font-size: 8px; color: #333; border-bottom: 1px solid #c8c8c8; background: linear-gradient(90deg, transparent 417px, #cfcfcf 417px, #cfcfcf 418px, transparent 418px); }
.tr.alt { background: linear-gradient(90deg, transparent 290px, #f3f3f3 290px, #f3f3f3 417px, #cfcfcf 417px, #cfcfcf 418px, #f3f3f3 418px); }
.m { color: #666; }
.vscroll { width: 16px; height: 78px; background: #e0e0e0; flex: none; }
.hscroll { height: 16px; width: 594px; background: #f3f3f3; }
.hthumb { width: 567px; height: 100%; background: #e0e0e0; }

.two-col { display: flex; margin-top: 5px; height: 131px; }
.col-air { width: 350px; flex: none; }
.col-air .bar { width: 313px; }
.col-alt { width: 260px; flex: none; }
.col-alt .bar { width: 260px; }
.ta-grid, .trow { display: grid; grid-template-columns: 50px 100px 50px 89px 24px; padding-left: 4px; }
.col-air .th { height: 15px; line-height: 21px; width: 313px; font-size: 7.500px; }
.tiny { width: 313px; height: 92px; overflow: hidden; font-family: "Lato", sans-serif; font-size: 5.400px; color: #555; }
.trow { height: 3.700px; line-height: 3px; white-space: nowrap; overflow: hidden; width: 313px; background: linear-gradient(#c4c4c4, #c4c4c4) left bottom / 275px 1px no-repeat, linear-gradient(#ececec, #ececec) right bottom / 38px 1px no-repeat, linear-gradient(#c4c4c4, #c4c4c4) 275px 0 / 1px 100% no-repeat; }
.trow span { overflow: hidden; }
.trow i { display: block; width: 2px; height: 2.500px; margin-left: 1px; }
.o { background: #f28e2b; }
.b { background: #5f87b5; }
.tb-grid { display: grid; grid-template-columns: 101px 62px 47px 47px; padding-left: 3px; }
.col-alt .th { height: 15px; line-height: 21px; font-size: 8.400px; }
.alt-body { display: flex; width: 260px; height: 90px; overflow: hidden; }
.alt-rows { width: 244px; flex: none; overflow: hidden; }
.tb { height: 12.570px; line-height: 13px; font-size: 8px; color: #333; overflow: hidden; border-bottom: 1px solid #cfcfcf; }
.tb.alt .m:nth-child(3) { background: #f3f3f3; }
.n { font-size: 7.500px; color: #777; padding-left: 14px; overflow: hidden; background: #fff; border-left: 1px solid #cfcfcf; line-height: 15px; }
.alt-scroll { width: 16px; background: #f3f3f3; flex: none; }
.alt-thumb { height: 30px; background: #e0e0e0; }

.bar-map { width: 609px; height: 25px; margin-top: 5px; border-width: 2px; line-height: 21px; }
.col-air .bar, .col-alt .bar { border-width: 2px; line-height: 20px; }
.map { width: 610px; height: 148px; margin-top: 2px; background: #ececec; overflow: hidden; }
.mapsvg { width: 610px; height: 146px; display: block; filter: blur(.3px); }
.pins circle { r: 7px; opacity: .72; stroke: rgba(255,255,255,.18); stroke-width: 1.500px; }

/* page scrollbar */
.scrollbar { width: 19px; flex: none; background: #f1f1f1; display: flex; flex-direction: column; align-items: center; }
.sb-arrow { width: 10px; height: 6px; flex: none; margin: 8px 0; }
.sb-track { flex: 1; width: 100%; padding: 19px 0 66px 1px; }
.sb-thumb { height: 100%; background: #c1c1c1; }

/* taskbar */
.taskbar { height: 50px; flex: none; background: #0b0606; display: flex; align-items: stretch; color: #fff; }
.start { width: 60px; flex: none; display: flex; align-items: center; justify-content: center; }
.start svg { width: 20px; height: 20px; }
.searchbox { width: 430px; flex: none; background: #f0f0f0; display: flex; align-items: center; padding-left: 12px; }
.cortana { width: 26px; height: 26px; border-radius: 50%; border: 3.500px solid #111; box-shadow: 0 0 2px #555; flex: none; }
.search-text { margin-left: 12px; font-size: 16.800px; color: #333; width: 347px; flex: none; }
.mic { width: 16px; height: 20px; flex: none; }
.cell { width: 60px; flex: none; display: flex; align-items: center; justify-content: center; position: relative; }
.cell-task { margin-right: 3px; }
.run::after { content: ""; position: absolute; left: 6px; right: 5px; bottom: 0; height: 3px; background: #8ae6ec; }
.on { background: #3d3836; }
.on::after { left: 0; right: 0; }
.i-task { width: 22px; height: 22px; }
.i-26 { width: 26px; height: 26px; }
.i-28 { width: 28px; height: 30px; }
.i-30 { width: 30px; height: 30px; }
.count { position: absolute; left: 34px; top: 24px; width: 20px; height: 20px; border-radius: 50%; background: #26262e; color: #e8e8e8; font-size: 14px; line-height: 20px; text-align: center; font-weight: 600; }
.word-w { font-family: "Liberation Sans", sans-serif; font-size: 13px; font-weight: 700; fill: #fff; }
.tray { flex: 1; display: flex; align-items: center; font-family: "Open Sans", sans-serif; }
.t-people { width: 20px; height: 20px; margin-left: 30px; flex: none; }
.t-caret { width: 16px; height: 9px; margin-left: 27px; flex: none; }
.t-vol { width: 20px; height: 18px; margin-left: 12px; flex: none; }
.t-lang { font-size: 14px; margin-left: 13px; width: 34px; flex: none; color: #eee; }
.t-clock { display: flex; flex-direction: column; align-items: center; width: 80px; margin-left: 15px; font-size: 14.500px; line-height: 24px; flex: none; color: #eee; white-space: nowrap; }
.t-date { letter-spacing: .6px; }
.t-note { width: 20px; height: 19px; margin-left: 15px; flex: none; }
.t-edge { width: 1px; height: 100%; margin-left: auto; margin-right: 5px; background: #555; flex: none; }
```
